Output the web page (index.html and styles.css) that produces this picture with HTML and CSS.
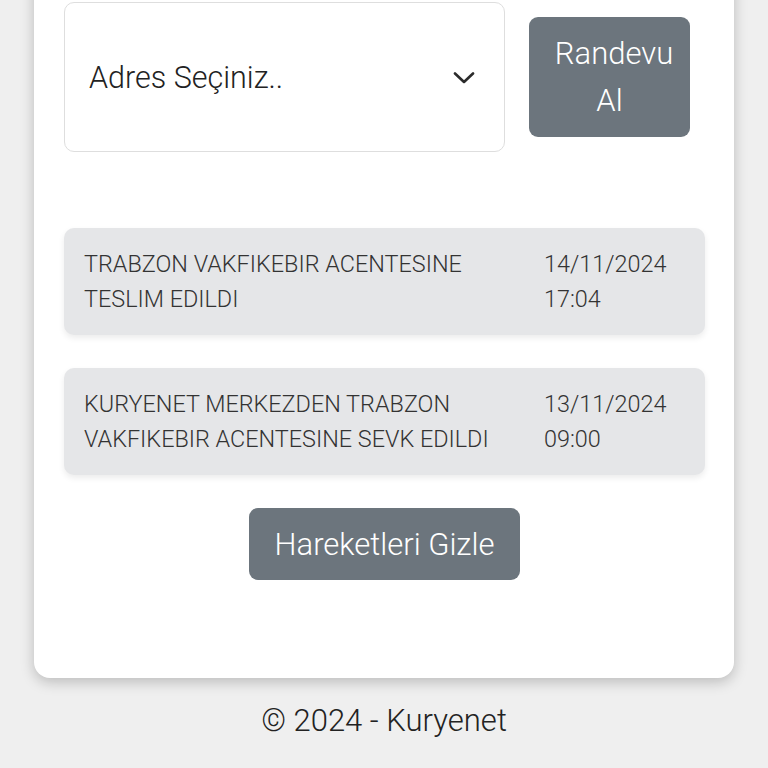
FILE: index.html
```html
<html lang="tr"><head><meta http-equiv="Content-Type" content="text/html; charset=UTF-8">
  <meta name="viewport" content="width=device-width,minimum-scale=1.0,maximum-scale=1.0,user-scalable=no" />
  <link rel="stylesheet" href="styles.css">
</head>
<body>
<div class="page-card">
  <div class="appointment-row">
    <div class="address-select">
      <span>Adres Seçiniz..</span>
      <svg class="chevron" width="22" height="12" viewBox="0 0 22 12"><polyline points="2,1.5 11,10 20,1.5" fill="none" stroke="#2b2b2b" stroke-width="2.6" stroke-linecap="round" stroke-linejoin="round"/></svg>
    </div>
    <button type="button" class="btn btn-appointment">Randevu Al</button>
  </div>

  <div class="movements">
    <div class="movement">
      <div class="movement-text">TRABZON VAKFIKEBIR ACENTESINE TESLIM EDILDI</div>
      <div class="movement-date">14/11/2024<br>17:04</div>
    </div>
    <div class="movement">
      <div class="movement-text">KURYENET MERKEZDEN TRABZON VAKFIKEBIR ACENTESINE SEVK EDILDI</div>
      <div class="movement-date">13/11/2024<br>09:00</div>
    </div>
  </div>

  <div class="toggle-wrap">
    <button type="button" class="btn btn-toggle">Hareketleri Gizle</button>
  </div>
</div>

<footer class="footer">© 2024 - Kuryenet</footer>
</body>
</html>
```

FILE: styles.css
```css
body {
  margin: 0;
  background: #efefef;
  font-family: Roboto, "Liberation Sans", sans-serif;
  font-weight: 300;
  color: #212529;
  overflow: hidden;
}

.page-card {
  margin: -40px 34px 0 34px;
  padding: 42px 29px 98px 30px;
  background: #fff;
  border-radius: 16px;
  box-shadow: 0 4px 14px rgba(0, 0, 0, 0.22);
}

.appointment-row {
  display: flex;
  align-items: flex-start;
  gap: 24px;
}

.address-select {
  width: 441px;
  height: 150px;
  box-sizing: border-box;
  border: 1.5px solid #dedede;
  border-radius: 10px;
  display: flex;
  align-items: center;
  justify-content: space-between;
  padding: 0 29px 0 24px;
  font-size: 30.5px;
  color: #222;
}

.chevron {
  margin-top: 2px;
}

.btn {
  border: none;
  background: #6c757d;
  color: #fff;
  font-family: Roboto, "Liberation Sans", sans-serif;
  font-weight: 300;
  font-size: 31px;
  border-radius: 9px;
  cursor: pointer;
}

.btn-appointment {
  width: 161px;
  height: 120px;
  margin-top: 15px;
  line-height: 47px;
  padding: 0 6px;
  text-indent: 9px;
}

.movements {
  margin-top: 76px;
  display: flex;
  flex-direction: column;
  gap: 33px;
}

.movement {
  background: #e5e6e8;
  border-radius: 10px;
  box-shadow: 0 3px 6px rgba(0, 0, 0, 0.08);
  padding: 19px 18px 18px 20px;
  display: grid;
  grid-template-columns: 440px auto;
  column-gap: 20px;
  font-size: 23.4px;
  line-height: 35px;
  color: #333;
}

.toggle-wrap {
  margin-top: 33px;
  text-align: center;
}

.btn-toggle {
  height: 72px;
  padding: 0 26px;
}

.footer {
  text-align: center;
  font-size: 31px;
  color: #222;
  margin-top: 24px;
}
```
